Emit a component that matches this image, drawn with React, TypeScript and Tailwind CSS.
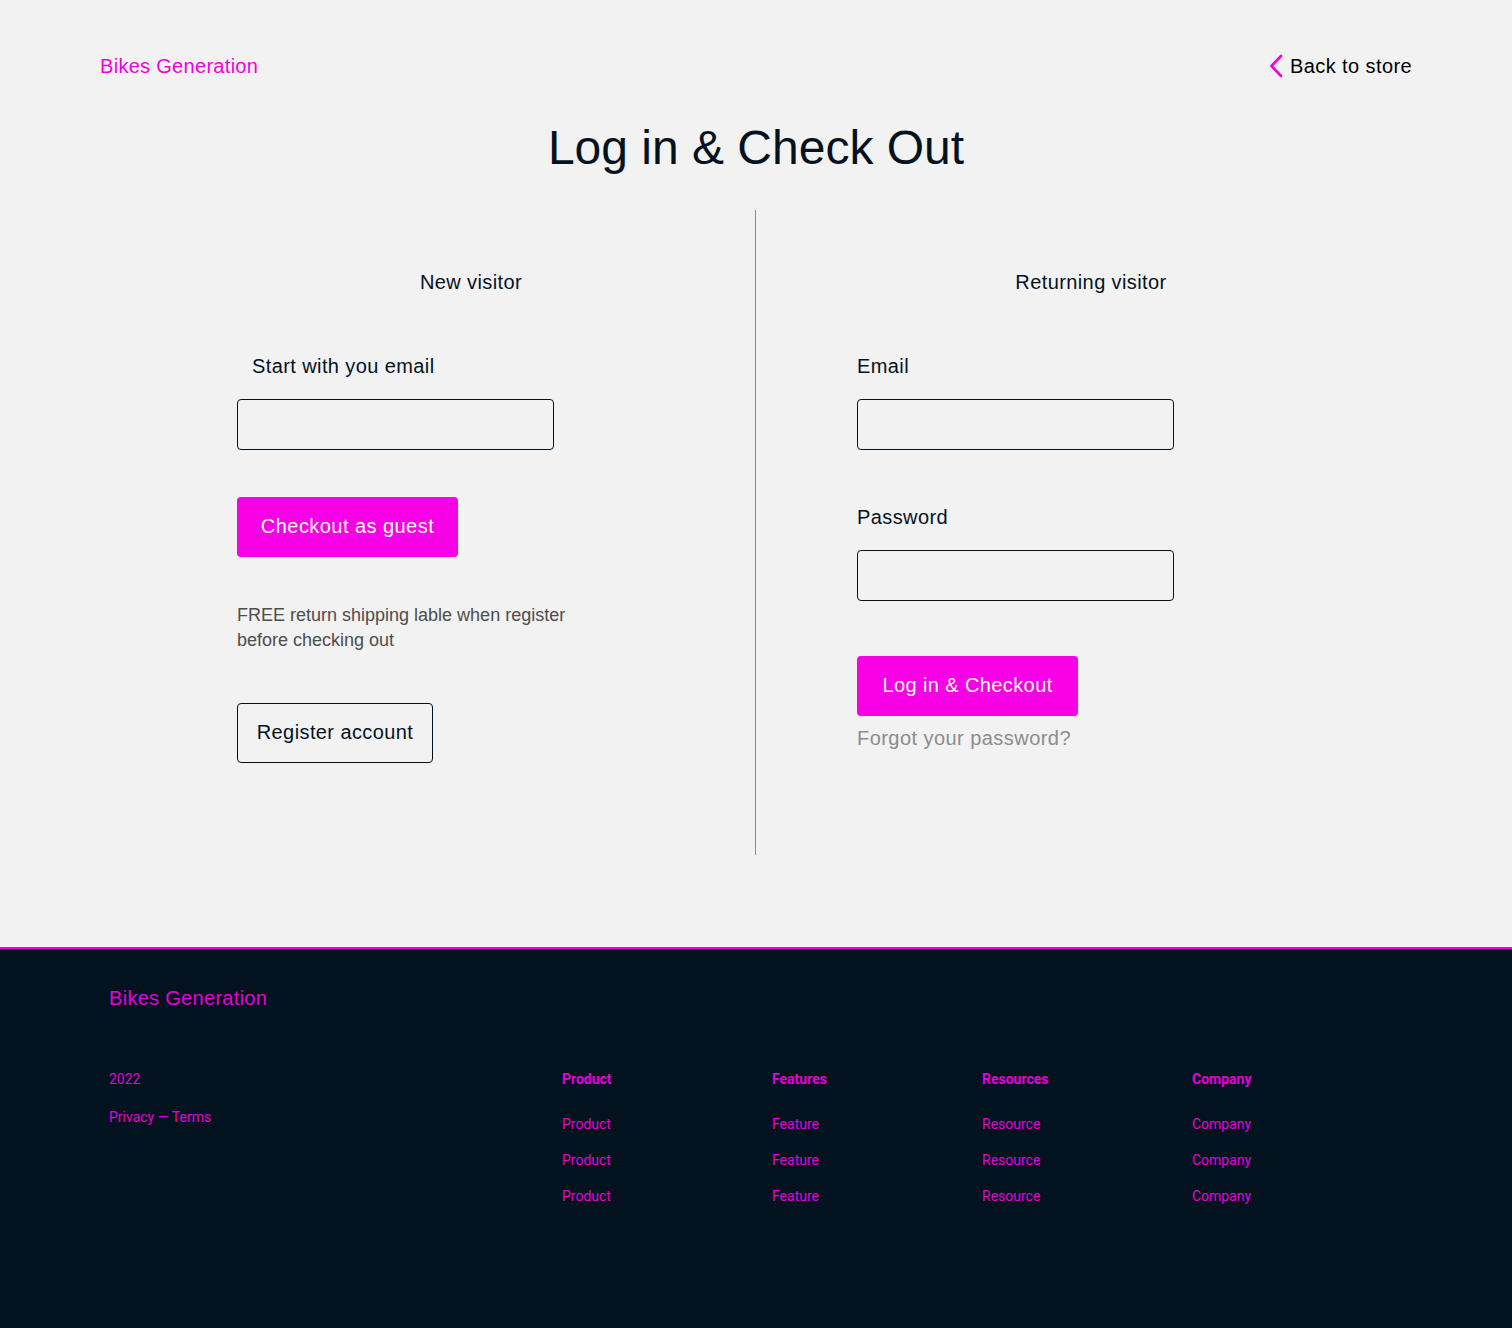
const columns = [
  { title: 'Product', item: 'Product' },
  { title: 'Features', item: 'Feature' },
  { title: 'Resources', item: 'Resource' },
  { title: 'Company', item: 'Company' },
];

function Field({ label, indent }: { label: string; indent?: boolean }) {
  return (
    <div>
      <label className={`block text-[20px] leading-7 tracking-[0.4px] text-[#04121f] ${indent ? 'pl-[15px]' : ''}`}>{label}</label>
      <input className="mt-[19px] block h-[51px] w-[317px] rounded-[4px] border border-[#04121f] bg-transparent px-3 text-lg outline-none" />
    </div>
  );
}

export default function App() {
  return (
    <div className="min-h-screen bg-[#f2f2f2] font-['Liberation_Sans',Arial,sans-serif]">
      <header className="flex items-center justify-between px-[100px] pt-[52px]">
        <a className="text-[20px] leading-7 tracking-[0.3px] text-[#f200e2]">Bikes Generation</a>
        <a className="flex items-center text-[20px] leading-7 tracking-[0.4px] text-black">
          <svg width="14" height="24" viewBox="0 0 14 24" fill="none" className="mr-[7px]">
            <polyline points="12,2 2.5,12 12,22" stroke="#f200e2" strokeWidth="2.6" strokeLinecap="round" strokeLinejoin="round" />
          </svg>
          Back to store
        </a>
      </header>

      <h1 className="mt-[40px] text-center text-[48px] leading-[56px] text-[#04121f]">Log in &amp; Check Out</h1>

      <main className="mt-[34px] flex pb-[92px] pl-[237px]">
        <section className="w-[468px] pt-[58px]">
          <h2 className="text-center text-[20px] leading-7 tracking-[0.4px] text-[#04121f]">New visitor</h2>
          <div className="mt-[56px]">
            <Field label="Start with you email" indent />
          </div>
          <button className="mt-[47px] h-[60px] w-[221px] rounded-[4px] bg-[#f700e6] pb-[3px] text-[20px] tracking-[0.45px] text-white">
            Checkout as guest
          </button>
          <p className="mt-[46px] w-[340px] text-[18px] leading-[25px] text-[#4d4d4d]">
            FREE return shipping lable when register before checking out
          </p>
          <button className="mt-[50px] h-[60px] w-[196px] rounded-[4px] border border-[#04121f] pb-[2px] text-[20px] tracking-[0.4px] text-[#04121f]">
            Register account
          </button>
        </section>

        <div className="ml-[50px] h-[645px] w-px bg-[#8c8c8c]" />

        <section className="ml-[101px] w-[468px] pt-[58px]">
          <h2 className="text-center text-[20px] leading-7 tracking-[0.4px] text-[#04121f]">Returning visitor</h2>
          <div className="mt-[56px]">
            <Field label="Email" />
          </div>
          <div className="mt-[53px]">
            <Field label="Password" />
          </div>
          <button className="mt-[55px] h-[60px] w-[221px] rounded-[4px] bg-[#f700e6] pb-[3px] text-[20px] tracking-[0.4px] text-white">
            Log in &amp; Checkout
          </button>
          <a className="mt-[10px] block text-[20px] leading-6 tracking-[0.45px] text-[#8c8c8c]">Forgot your password?</a>
        </section>
      </main>

      <footer className="h-[381px] border-t-2 border-[#f200e2] bg-[#03121f] px-[109px] pt-[35px] font-['Roboto',sans-serif] text-[#e600d8]">
        <div className="text-[20px] leading-7 tracking-[0.3px] font-['Liberation_Sans',Arial,sans-serif]">Bikes Generation</div>
        <div className="mt-[57px] flex">
          <div className="w-[453px] text-[14px] leading-5">
            <div>2022</div>
            <div className="mt-[18px]">Privacy — Terms</div>
          </div>
          {columns.map((c) => (
            <div key={c.title} className="w-[210px] text-[14px] leading-5">
              <div className="font-bold">{c.title}</div>
              <ul className="mt-[25px] flex flex-col gap-4">
                <li>{c.item}</li>
                <li>{c.item}</li>
                <li>{c.item}</li>
              </ul>
            </div>
          ))}
        </div>
      </footer>
    </div>
  );
}
